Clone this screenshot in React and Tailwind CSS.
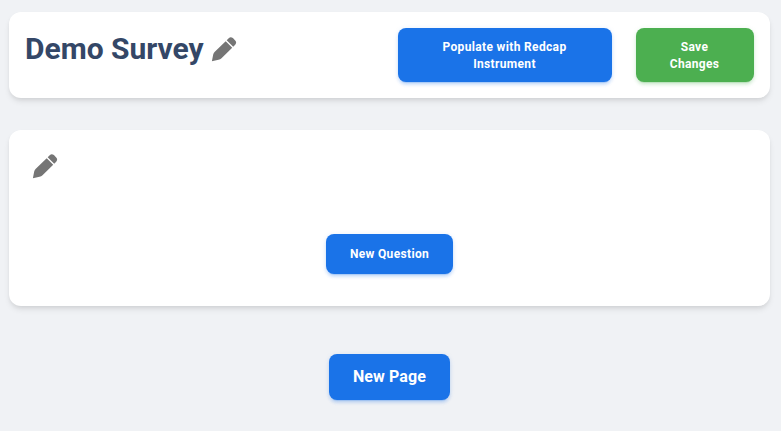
const blue = 'bg-[#1a73e8] shadow-[0_3px_3px_0_rgba(26,115,232,0.15),0_3px_1px_-2px_rgba(26,115,232,0.2),0_1px_5px_0_rgba(26,115,232,0.15)]';
const green = 'bg-[#4caf50] shadow-[0_3px_3px_0_rgba(76,175,80,0.15),0_3px_1px_-2px_rgba(76,175,80,0.2),0_1px_5px_0_rgba(76,175,80,0.15)]';
const cardShadow = 'shadow-[0_4px_6px_-1px_rgba(0,0,0,0.1),0_2px_4px_-1px_rgba(0,0,0,0.06)]';

function Pencil() {
  return (
    <svg className="-ml-px size-[26px] fill-[#757575]" viewBox="0 0 26 26" aria-hidden="true">
      <path d="M.9 24.200 2.200 17.600Q2.600 16 3.800 14.800L14.700 4.200 21.200 10.700 10.500 21.200Q9.300 22.400 7.500 22.800Z" />
      <path d="M15.700 3.200 17.700 1.200Q19.700-.8 21.900 1.100L24.200 3.400Q26.100 5.600 24.200 7.700L22.200 9.700Z" />
    </svg>
  );
}

function Button({ color, className, children }) {
  return (
    <button className={`flex shrink-0 items-center justify-center rounded-lg text-center font-bold text-white ${color} ${className}`}>
      {children}
    </button>
  );
}

export default function App() {
  return (
    <main className="h-[431px] w-[781px] bg-[#f0f2f5] pt-3 pr-[11px] pl-[9px] font-[Roboto,sans-serif]">
      <header className={`flex h-[86px] items-start rounded-xl bg-white p-4 ${cardShadow}`}>
        <h3 className="text-[30px] leading-[41px] font-bold text-[#344767]">Demo Survey</h3>
        <div className="mt-[9px] ml-2">
          <Pencil />
        </div>
        <div className="ml-auto flex gap-6">
          <Button color={blue} className="h-[54px] w-[214px] pt-px pr-px text-xs leading-[17px] tracking-[0.343px]">
            <span>Populate with Redcap<br />Instrument</span>
          </Button>
          <Button color={green} className="h-[54px] w-[118px] pt-px pr-px text-xs leading-[17px] tracking-[0.343px]">
            <span>Save<br />Changes</span>
          </Button>
        </div>
      </header>

      <section className={`mt-8 flex h-[176px] flex-col rounded-xl bg-white p-6 pb-8 ${cardShadow}`}>
        <Pencil />
        <div className="mt-auto flex justify-center">
          <Button color={blue} className="h-10 w-[127px] text-xs leading-[16.8px] tracking-[0.343px]">New Question</Button>
        </div>
      </section>

      <div className="mt-12 flex justify-center">
        <Button color={blue} className="h-[46px] w-[121px] text-base leading-[22px] tracking-[0.1px]">New Page</Button>
      </div>
    </main>
  );
}
